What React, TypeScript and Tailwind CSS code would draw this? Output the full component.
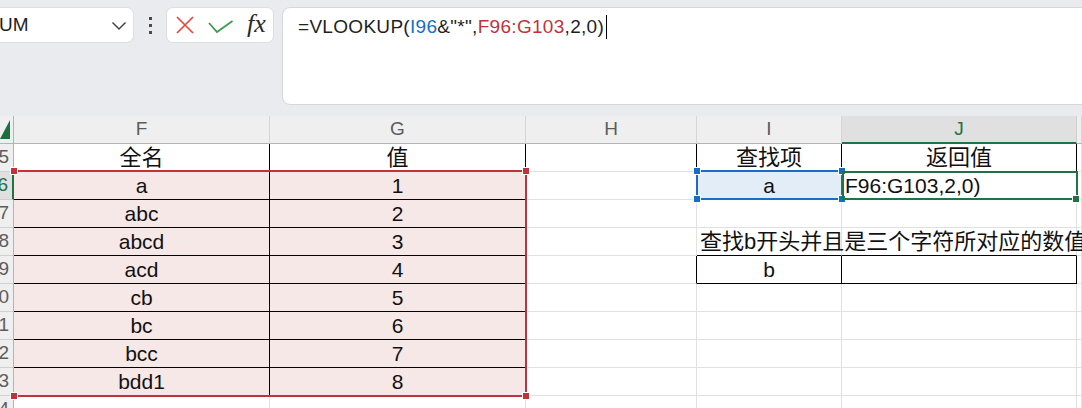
import React from 'react';

type Row = {
  n: number;
  F?: string;
  G?: string;
  I?: string;
  J?: string;
};

const rows: Row[] = [
  { n: 95, F: '全名', G: '值', I: '查找项', J: '返回值' },
  { n: 96, F: 'a', G: '1', I: 'a', J: 'F96:G103,2,0)' },
  { n: 97, F: 'abc', G: '2' },
  { n: 98, F: 'abcd', G: '3', I: '查找b开头并且是三个字符所对应的数值' },
  { n: 99, F: 'acd', G: '4', I: 'b' },
  { n: 100, F: 'cb', G: '5' },
  { n: 101, F: 'bc', G: '6' },
  { n: 102, F: 'bcc', G: '7' },
  { n: 103, F: 'bdd1', G: '8' },
  { n: 104 },
];

const cellFont = "font-['Liberation_Sans','Noto_Sans_CJK_SC',sans-serif] text-[#111]";

// right / bottom border colour for each data cell
function edges(col: string, n: number) {
  const inTable = n >= 95 && n <= 103;
  let r = false;
  let b = false;
  if (col === 'F' || col === 'G') {
    r = inTable;
    b = inTable;
  } else if (col === 'H') {
    r = n === 95 || n === 99;
  } else if (col === 'I' || col === 'J') {
    r = n === 95 || n === 99;
    b = n === 95 || n === 98 || n === 99;
  }
  return `${r ? 'border-r-black' : 'border-r-[#e1e1e1]'} ${b ? 'border-b-black' : 'border-b-[#e1e1e1]'}`;
}

function Handle({ className }: { className: string }) {
  return <div className={`absolute w-[6px] h-[6px] outline outline-1 outline-white ${className}`} />;
}

function FormulaBar() {
  return (
    <div className="h-[116px] flex items-start pt-[7px] shrink-0">
      {/* name box */}
      <div className="w-[134px] h-[36px] bg-white rounded-r-[7px] border border-l-0 border-[#dcdee2] flex items-center justify-between pr-[6px]">
        <span className="font-['Liberation_Sans',sans-serif] text-[19px] text-[#1f1f1f] -ml-[1px]">UM</span>
        <svg width="16" height="10" viewBox="0 0 16 10" className="mt-[2px]">
          <polyline points="1.5,1.5 8,8 14.5,1.5" fill="none" stroke="#444" strokeWidth="1.5" />
        </svg>
      </div>

      {/* more dots */}
      <div className="w-[32px] h-[36px] flex flex-col items-center justify-center gap-[4px]">
        <div className="w-[3px] h-[3px] bg-[#4a4a4a]" />
        <div className="w-[3px] h-[3px] bg-[#4a4a4a]" />
        <div className="w-[3px] h-[3px] bg-[#4a4a4a]" />
      </div>

      {/* cancel / enter / fx */}
      <div className="w-[108px] h-[36px] bg-white rounded-[7px] border border-[#dcdee2] flex items-center pl-[8px]">
        <svg width="20" height="20" viewBox="0 0 20 20">
          <path d="M2 2 L18 18 M18 2 L2 18" stroke="#e8443a" strokeWidth="1.7" fill="none" />
        </svg>
        <svg width="26" height="14" viewBox="0 0 26 14" className="ml-[13px] mt-[4px]">
          <polyline points="1,3 9,12 24.5,1" stroke="#3a9c52" strokeWidth="1.8" fill="none" />
        </svg>
        <span className="ml-[13px] font-['Liberation_Serif',serif] italic text-[26px] leading-none text-[#2a2a2a] -mt-[2px]">
          fx
        </span>
      </div>

      {/* formula input */}
      <div className="ml-[8px] flex-1 -mr-[20px] h-[98px] bg-white rounded-[8px] border border-[#d6d8dc] pl-[15px] pt-[6px]">
        <div className="flex items-center font-['Liberation_Sans',sans-serif] text-[19px] tracking-[0.3px] leading-[26px] text-[#1f1f1f] whitespace-pre">
          <span>=VLOOKUP(</span>
          <span className="text-[#1270c8]">I96</span>
          <span>&amp;"*",</span>
          <span className="text-[#c4313b]">F96:G103</span>
          <span>,2,0)</span>
          <span className="ml-[2px] w-[1px] h-[24px] bg-black" />
        </div>
      </div>
    </div>
  );
}

function Sheet() {
  const cols = ['F', 'G', 'H', 'I', 'J', 'K'];
  return (
    <div className="relative flex-1 bg-white overflow-hidden">
      <div className="grid grid-cols-[14px_256px_256px_171px_145px_235px_1fr]">
        {/* header row */}
        <div className="h-[28px] bg-[#efefef] border-r border-b border-r-[#b4b4b4] border-b-[#b4b4b4] relative overflow-hidden">
          <svg width="12" height="20" viewBox="0 0 12 20" className="absolute left-0 top-[4px]">
            <polygon points="10,0 10,19 0,19" fill="#1e6e42" />
          </svg>
        </div>
        {cols.map((c) => (
          <div
            key={c}
            className={`h-[28px] flex items-center justify-center border-r border-b font-['Liberation_Sans',sans-serif] text-[19px] ${
              c === 'J'
                ? 'bg-[#e0e0e0] border-r-[#cfcfcf] border-b-2 border-b-[#217346] text-[#217346]'
                : 'bg-[#efefef] border-r-[#d6d6d6] border-b-[#b4b4b4] text-[#5c5c5c]'
            }`}
          >
            {c === 'K' ? '' : c}
          </div>
        ))}

        {rows.map((r) => (
          <React.Fragment key={r.n}>
            <div
              className={`h-[28px] flex items-center justify-end pr-[4px] overflow-hidden border-b font-['Liberation_Sans',sans-serif] text-[19px] whitespace-nowrap ${
                r.n === 96
                  ? 'bg-[#e0e0e0] border-r-2 border-r-[#217346] border-b-[#d0d0d0] text-[#217346]'
                  : 'bg-[#efefef] border-r border-r-[#b4b4b4] border-b-[#d0d0d0] text-[#5c5c5c]'
              }`}
            >
              {r.n}
            </div>
            {cols.map((c) => {
              const v = (r as Record<string, string | number | undefined>)[c] as string | undefined;
              const pink = (c === 'F' || c === 'G') && r.n >= 96 && r.n <= 103;
              const blue = c === 'I' && r.n === 96;
              const left = (c === 'J' && r.n === 96) || (c === 'I' && r.n === 98);
              const cjk = !!v && /[\u4e00-\u9fff]/.test(v);
              return (
                <div
                  key={c}
                  className={`h-[28px] border-r border-b flex items-center ${edges(c, r.n)} ${
                    pink ? 'bg-[#f7e8e8]' : blue ? 'bg-[#e3edf8]' : ''
                  } ${left ? 'justify-start pl-[3px]' : 'justify-center'} ${cjk ? 'text-[22px]' : 'text-[21px]'} ${cellFont}`}
                >
                  {v && <span className="relative z-10 whitespace-nowrap">{v}</span>}
                </div>
              );
            })}
          </React.Fragment>
        ))}
      </div>

      {/* reference highlight F96:G103 */}
      <div className="absolute left-[14px] top-[54px] w-[513px] h-[227px] border-2 border-l-0 border-[#c2323b] pointer-events-none" />
      <Handle className="left-[11px] top-[52px] bg-[#c2323b]" />
      <Handle className="left-[523px] top-[52px] bg-[#c2323b]" />
      <Handle className="left-[11px] top-[277px] bg-[#c2323b]" />
      <Handle className="left-[523px] top-[277px] bg-[#c2323b]" />

      {/* reference highlight I96 */}
      <div className="absolute left-[696px] top-[54px] w-[147px] h-[30px] border-2 border-[#1a6dc2]" />
      <Handle className="left-[694px] top-[52px] bg-[#1a6dc2]" />
      <Handle className="left-[839px] top-[52px] bg-[#1a6dc2]" />
      <Handle className="left-[694px] top-[80px] bg-[#1a6dc2]" />
      <Handle className="left-[839px] top-[80px] bg-[#1a6dc2]" />

      {/* active cell J96 */}
      <div className="absolute left-[842px] top-[55px] w-[236px] h-[29px] border-2 border-[#217346]" />
      <div className="absolute left-[1073px] top-[80px] w-[6px] h-[6px] bg-[#217346] outline outline-1 outline-white" />
    </div>
  );
}

export default function App() {
  return (
    <div className="w-[1082px] h-[408px] overflow-hidden bg-[#e9ebee] flex flex-col">
      <FormulaBar />
      <Sheet />
    </div>
  );
}
